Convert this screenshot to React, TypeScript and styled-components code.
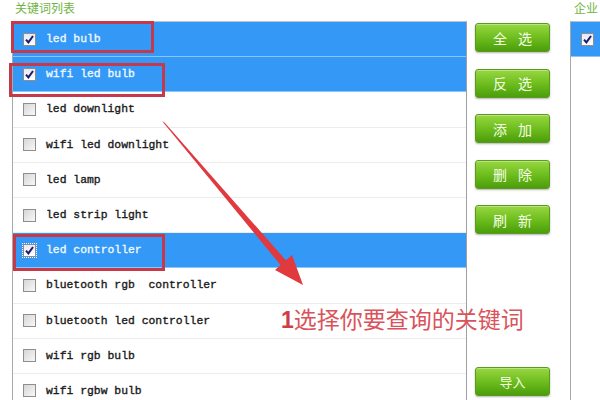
import React from 'react';
import styled, { createGlobalStyle } from 'styled-components';

const Global = createGlobalStyle`
  html, body {
    margin: 0;
    padding: 0;
    background: #fff;
    overflow: hidden;
  }
  body {
    font-family: "Noto Sans CJK SC", "Liberation Sans", sans-serif;
  }
`;

const Page = styled.div`
  position: relative;
  width: 600px;
  height: 400px;
  overflow: hidden;
  display: flex;
  padding-left: 12px;
  box-sizing: border-box;
`;

const Column = styled.div<{ $w: number }>`
  width: ${p => p.$w}px;
  flex: none;
  display: flex;
  flex-direction: column;
  min-height: 0;
`;

const Title = styled.div<{ $pad?: number }>`
  flex: none;
  height: 20px;
  padding: 1px 0 0 ${p => p.$pad || 3}px;
  font-size: 12px;
  line-height: 13px;
  color: #6fb43f;
  white-space: nowrap;
`;

const Panel = styled.div<{ $right?: boolean }>`
  flex: 1;
  min-height: 0;
  overflow: hidden;
  border-left: 1px solid #a9a9a9;
  border-top: 1px solid #b9c3cc;
  border-right: ${p => (p.$right ? '1px solid #a0a0a0' : 'none')};
`;

const Row = styled.div<{ $sel?: boolean }>`
  height: 35.2px;
  box-sizing: border-box;
  display: flex;
  align-items: center;
  gap: 10px;
  padding-left: 10px;
  background: ${p => (p.$sel ? '#3398f6' : '#fff')};
  border-bottom: 1px solid ${p => (p.$sel ? '#8cc6f7' : '#ececec')};
  color: ${p => (p.$sel ? '#eef8ff' : '#1a1a1a')};
  font-family: "Liberation Mono", "DejaVu Sans Mono", monospace;
  font-size: 11.4px;
  -webkit-text-stroke: 0.35px currentColor;
  white-space: pre;
`;

const Box = styled.span<{ $on?: boolean; $focus?: boolean }>`
  width: 13px;
  height: 13px;
  box-sizing: border-box;
  flex: none;
  display: flex;
  align-items: center;
  justify-content: center;
  border: 1px solid #8e8e8e;
  background: ${p => (p.$on ? 'linear-gradient(#e8e8f0, #ffffff)' : 'linear-gradient(135deg, #d6d6d6, #f8f8f8)')};
  outline: ${p => (p.$focus ? '1px dotted #ffffff' : 'none')};
  outline-offset: 0;
`;

const Buttons = styled.div`
  display: flex;
  flex-direction: column;
  gap: 16.5px;
  padding: 23px 0 0 8px;
  height: 100%;
  box-sizing: border-box;
`;

const Btn = styled.div<{ $push?: boolean }>`
  width: 75px;
  height: 29px;
  box-sizing: border-box;
  flex: none;
  border: 1px solid #5c9a1e;
  border-radius: 3px;
  background: linear-gradient(#97d740, #6bbb1c 55%, #4b9d0b);
  box-shadow: 0 1px 2px rgba(0, 0, 0, 0.3), inset 0 1px 0 rgba(255, 255, 255, 0.35);
  color: #f4ffe6;
  font-size: ${p => (p.$push ? 13 : 14)}px;
  letter-spacing: ${p => (p.$push ? 0 : 11)}px;
  padding-left: ${p => (p.$push ? 0 : 11)}px;
  display: flex;
  align-items: center;
  justify-content: center;
  white-space: nowrap;
  margin-top: ${p => (p.$push ? 'auto' : '0')};
  margin-bottom: ${p => (p.$push ? '4px' : '0')};
`;

const Mark = styled.div<{ $x: number; $y: number; $w: number; $h: number }>`
  position: absolute;
  left: ${p => p.$x}px;
  top: ${p => p.$y}px;
  width: ${p => p.$w}px;
  height: ${p => p.$h}px;
  box-sizing: border-box;
  border: 3px solid #c53a4b;
  pointer-events: none;
`;

const Note = styled.div`
  position: absolute;
  left: 281px;
  top: 304px;
  font-size: 23px;
  line-height: 28px;
  color: #d9535b;
  white-space: nowrap;
  b {
    font-family: "Liberation Sans", sans-serif;
    font-weight: bold;
    color: #cf3d48;
  }
`;

const ArrowSvg = styled.svg`
  position: absolute;
  left: 0;
  top: 0;
  pointer-events: none;
`;

const Check = () => (
  <svg width="9" height="9" viewBox="0 0 9 9">
    <path d="M1 4.6 L3.4 7.4 L8 1" fill="none" stroke="#1c1c6e" strokeWidth="2" />
  </svg>
);

const items: { t: string; sel?: boolean; focus?: boolean }[] = [
  { t: 'led bulb', sel: true },
  { t: 'wifi led bulb', sel: true },
  { t: 'led downlight' },
  { t: 'wifi led downlight' },
  { t: 'led lamp' },
  { t: 'led strip light' },
  { t: 'led controller', sel: true, focus: true },
  { t: 'bluetooth rgb  controller' },
  { t: 'bluetooth led controller' },
  { t: 'wifi rgb bulb' },
  { t: 'wifi rgbw bulb' },
];

export default function App() {
  return (
    <>
      <Global />
      <Page>
        <Column $w={455}>
          <Title>关键词列表</Title>
          <Panel $right>
            {items.map(it => (
              <Row key={it.t} $sel={it.sel}>
                <Box $on={it.sel} $focus={it.focus}>{it.sel && <Check />}</Box>
                {it.t}
              </Row>
            ))}
          </Panel>
        </Column>
        <Column $w={103}>
          <Buttons>
            <Btn>全选</Btn>
            <Btn>反选</Btn>
            <Btn>添加</Btn>
            <Btn>删除</Btn>
            <Btn>刷新</Btn>
            <Btn $push>导入</Btn>
          </Buttons>
        </Column>
        <Column $w={30}>
          <Title $pad={4}>企业</Title>
          <Panel>
            <Row $sel>
              <Box $on><Check /></Box>
            </Row>
          </Panel>
        </Column>

        <Mark $x={11} $y={21} $w={143} $h={32} />
        <Mark $x={9} $y={63} $w={156} $h={34} />
        <Mark $x={13} $y={234} $w={152} $h={37} />

        <ArrowSvg width="600" height="400">
          <polygon points="162,121 165,123 290,265 283,268" fill="#e0393e" />
          <polygon points="303,285 275,270 292,255" fill="#e0393e" />
        </ArrowSvg>

        <Note>
          <b>1</b>选择你要查询的关键词
        </Note>
      </Page>
    </>
  );
}
